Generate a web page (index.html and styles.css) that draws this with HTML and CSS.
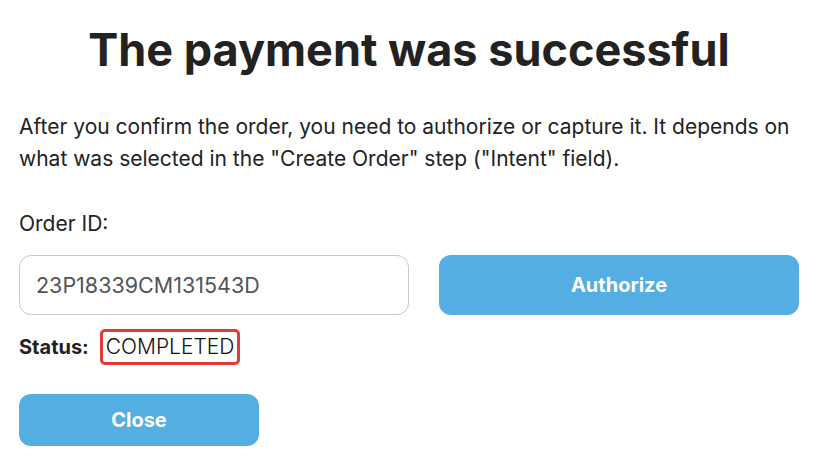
FILE: index.html
```html
<!DOCTYPE html>
<html>
<head>
  <title>Payment Result</title>
  <meta name="viewport" content="width=device-width, initial-scale=1">
  <link rel="stylesheet" href="styles.css">
</head>
<body>
  <div class="container">
    <h1>The payment was successful</h1>
    <p class="intro">After you confirm the order, you need to authorize or capture it. It depends on what was selected in the "Create Order" step ("Intent" field).</p>

    <label for="orderId">Order ID:</label>
    <div class="order-row">
      <input type="text" id="orderId" name="orderId" value="23P18339CM131543D">
      <button type="button" class="btn">Authorize</button>
    </div>

    <div class="status">
      <span class="status-label">Status:</span>
      <span class="status-value">COMPLETED</span>
    </div>

    <button type="button" class="btn btn-close">Close</button>
  </div>
</body>
</html>
```

FILE: styles.css
```css
:root {
  --text-color: #222222;
  --muted-color: #555555;
  --input-border-color: #c8c8c8;
  --button-bg-color: #54aee1;
  --highlight-color: #e03c31;
  --font-family: 'Inter', sans-serif;
}

body {
  background: #ffffff;
  color: var(--text-color);
  font-family: var(--font-family);
  margin: 0;
  padding: 0;
}

.container {
  padding: 0 20px 0 19px;
}

h1 {
  font-size: 45px;
  font-weight: 700;
  text-align: center;
  margin: 22px 0 0;
  line-height: 56px;
}

.intro {
  font-size: 21px;
  line-height: 32px;
  margin: 33px 0 0;
}

label {
  display: block;
  font-size: 21px;
  line-height: 24px;
  margin-top: 37px;
}

.order-row {
  display: flex;
  gap: 30px;
  margin-top: 19px;
}

.order-row input {
  flex: 0 0 390px;
  box-sizing: border-box;
  height: 60px;
  padding: 0 16px;
  font-family: var(--font-family);
  font-size: 21.5px;
  color: var(--muted-color);
  border: 1px solid var(--input-border-color);
  border-radius: 12px;
  outline: none;
}

.btn {
  background-color: var(--button-bg-color);
  color: #ffffff;
  border: none;
  border-radius: 12px;
  font-family: var(--font-family);
  font-size: 20px;
  font-weight: 700;
  cursor: pointer;
}

.order-row .btn {
  flex: 1;
  height: 60px;
}

.status {
  display: flex;
  align-items: center;
  gap: 11px;
  margin-top: 14px;
}

.status-label {
  font-size: 20px;
  font-weight: 700;
}

.status-value {
  border: 3px solid var(--highlight-color);
  border-radius: 5px;
  padding: 0 3px;
  height: 30px;
  line-height: 30px;
  font-size: 21px;
  font-weight: 300;
  color: #111111;
}

.btn-close {
  margin-top: 29px;
  width: 240px;
  height: 52px;
}
```
